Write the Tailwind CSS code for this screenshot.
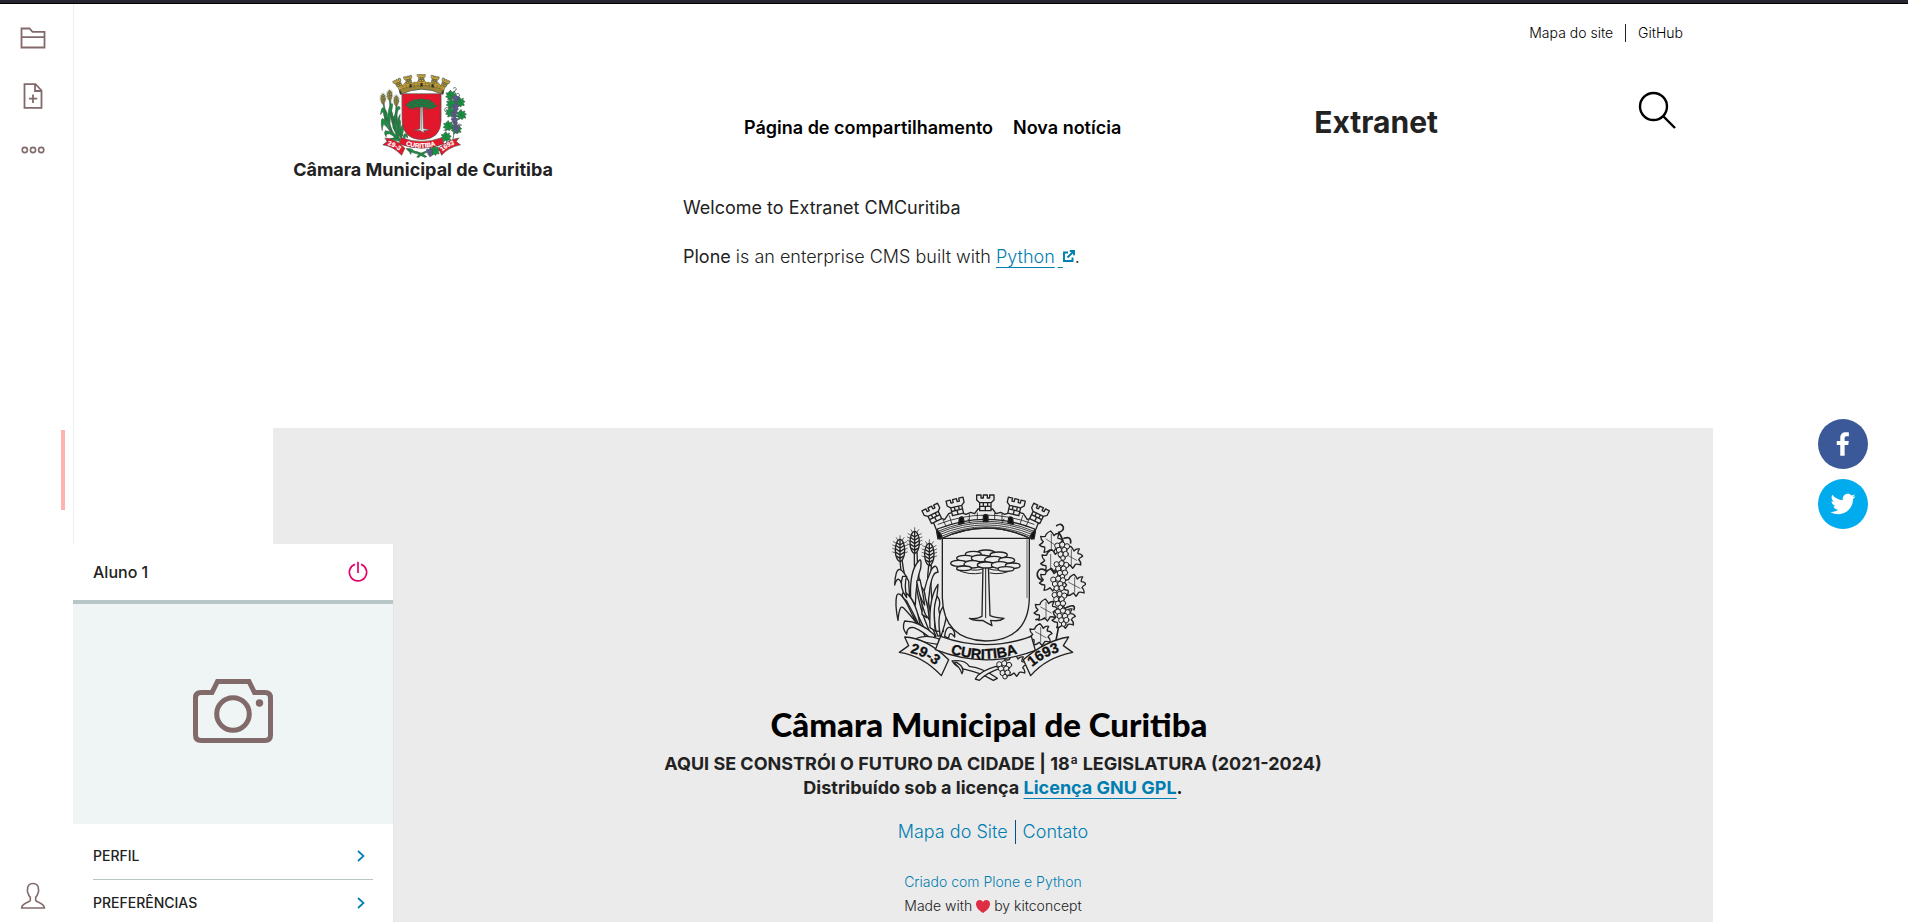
<!DOCTYPE html>
<html lang="pt-BR">
<head>
<meta charset="utf-8">
<title>Extranet — Câmara Municipal de Curitiba</title>
<script src="https://cdn.jsdelivr.net/npm/@tailwindcss/browser@4"></script>
</head>
<body class="min-h-screen flex flex-col bg-white text-[#222] text-lg leading-6 font-light font-['Inter',sans-serif]">

<svg class="absolute w-0 h-0" aria-hidden="true">
  <defs>
    <path id="tower" d="M-26 -20h13v9h7v-9h12v9h7v-9h13v15l-9 8v24h-34v-24l-9 -8zM-17 3H17M-17 14H17M-6 3V14M7 3V14M0 14V27"/>
    <g id="ear">
      <path fill="none" stroke-width="2" d="M-8 -20l-12-6M-8 -10l-14-6M-8 0l-14-6M-8 10l-14-5M8 -20l12-6M8 -10l14-6M8 0l14-6M8 10l14-5M-5 -28l-6-10M0 -30v-14M5 -28l7-10"/>
      <ellipse rx="14" ry="33"/>
      <path d="M0 -32V32M-11 -14L0 -6L11 -14M-12 -4L0 4L12 -4M-12 6L0 14L12 6M-9 18L0 24L9 18M-9 -22L0 -16L9 -22" fill="none"/>
    </g>
    <path id="vineleaf" d="M-2 -32Q4 -26 8 -18Q14 -26 24 -24Q18 -14 20 -10Q30 -10 34 -2Q24 2 22 8Q30 14 28 24Q18 20 12 22Q8 30 4 34Q0 28 -4 24Q-12 32 -22 32Q-18 22 -20 16Q-30 16 -36 10Q-26 4 -24 0Q-32 -6 -32 -16Q-24 -14 -18 -16Q-16 -26 -2 -32z"/>
    <g id="grapes">
      <circle r="8" cx="-14" cy="-12"/><circle r="8" cx="1" cy="-15"/><circle r="8" cx="15" cy="-10"/>
      <circle r="8" cx="-9" cy="1"/><circle r="8" cx="7" cy="1"/><circle r="8" cx="-4" cy="14"/><circle r="8" cx="11" cy="13"/><circle r="7" cx="3" cy="25"/>
    </g>
    <path id="band-l" d="M122 516Q168 524 205 560"/>
    <path id="band-c" d="M243 517Q348 552 455 514"/>
    <path id="band-r" d="M488 558Q530 522 586 508"/>
    <symbol id="crest" viewBox="68 40 582 562">
      <g class="stroke-(--line)" stroke-width="4" stroke-linejoin="round" stroke-linecap="round">
        <!-- wheat and leaves -->
        <g class="fill-(--leaf)">
          <path d="M92 238Q98 350 170 470L178 466Q112 350 98 236z"/>
          <path d="M135 214Q132 360 190 470L200 466Q146 350 143 214z"/>
          <path d="M178 254Q164 370 206 466L214 462Q178 370 186 254z"/>
          <path d="M118 300Q80 225 76 312Q88 270 104 330Q112 370 122 372z"/>
          <path d="M124 350Q120 270 148 240Q158 228 154 262Q140 300 138 372z"/>
          <path d="M158 400Q156 330 186 266Q202 242 206 274Q190 270 182 320Q176 370 172 410z"/>
          <path d="M128 400Q92 320 82 344Q76 370 86 418Q90 370 102 380Q122 400 146 432z"/>
          <path d="M150 420Q136 350 104 332Q90 344 112 360Q134 400 156 446z"/>
          <path d="M168 400Q146 340 152 316Q166 320 168 350Q178 380 180 416z"/>
          <path d="M182 440Q178 350 206 310Q204 350 196 380Q194 420 198 450z"/>
          <path d="M200 450Q188 380 204 346Q216 360 208 384Q214 420 222 452z"/>
          <path d="M214 470Q200 400 224 374Q236 400 226 430z"/>
          <path d="M196 462Q150 420 106 420Q96 440 112 460Q112 436 134 440Q160 450 196 482z"/>
          <path d="M210 474Q170 458 136 474Q160 484 206 490z"/>
          <path d="M226 466Q230 430 248 442Q258 452 256 468Q240 446 238 472z"/>
          <path d="M100 286Q88 320 112 350Q104 310 112 286z"/>
          <path d="M142 300Q150 350 166 372Q160 330 152 296z"/>
        </g>
        <g class="fill-(--gold)">
          <use href="#ear" x="92" y="208"/>
          <use href="#ear" x="136" y="184"/>
          <use href="#ear" x="180" y="220"/>
        </g>
        <!-- vine -->
        <path fill="none" stroke-width="5" d="M562 134Q576 124 582 138Q584 150 568 154Q600 200 566 250Q548 300 570 350Q574 420 560 478M584 172Q606 164 604 186M560 300Q500 306 504 276Q510 258 528 268M590 380Q620 366 614 386M540 410L500 416"/>
        <g class="fill-(--leaf)">
          <use href="#vineleaf" x="546" y="182"/><use href="#vineleaf" x="606" y="228"/>
          <use href="#vineleaf" x="550" y="238"/><use href="#vineleaf" x="616" y="312"/>
          <use href="#vineleaf" x="546" y="296"/><use href="#vineleaf" x="530" y="386"/>
          <use href="#vineleaf" x="584" y="408"/><use href="#vineleaf" x="514" y="460"/>
          <use href="#vineleaf" x="438" y="552"/>
          <path d="M248 540Q286 534 300 556Q340 560 384 592L372 598Q330 574 290 566Q262 562 248 540z"/>
          <path d="M318 594Q330 570 380 556L392 562Q350 576 330 598z"/>
          <path d="M254 546Q270 556 278 578Q288 560 262 544z"/>
        </g>
        <path fill="none" stroke-width="2" d="M546 160V206M530 174L560 194M606 206V252M590 220L622 238M616 290V334M598 304L632 322M530 364V410M514 378L546 396M514 440V482M498 452L530 470M544 220V260"/>
        <g class="fill-(--grape)" stroke-width="3">
          <use href="#grapes" x="578" y="206"/><use href="#grapes" x="576" y="262"/>
          <use href="#grapes" x="566" y="308"/><use href="#grapes" x="570" y="354"/>
          <use href="#grapes" x="580" y="404"/><use href="#grapes" x="404" y="562"/>
        </g>
        <!-- shield -->
        <path class="fill-(--shield)" d="M219 172H480V350Q478 476 350 480Q222 476 219 350z"/>
        <path fill="none" stroke-width="2" d="M473 176V350"/>
        <!-- araucaria -->
        <path class="fill-(--trunk)" d="M341 250L338 406Q320 416 300 412Q310 420 340 418L350 424L368 434L364 418Q390 422 404 412Q378 410 362 404L357 250z"/>
        <path fill="none" stroke-width="3" d="M349 262V410M336 276Q300 284 262 266M362 276Q400 284 432 264M340 264Q310 274 280 258M360 264Q390 274 414 258"/>
        <g class="fill-(--tree)">
          <ellipse cx="350" cy="216" rx="26" ry="9"/><ellipse cx="312" cy="220" rx="24" ry="9"/><ellipse cx="388" cy="222" rx="26" ry="9"/>
          <ellipse cx="288" cy="232" rx="26" ry="9"/><ellipse cx="334" cy="232" rx="28" ry="10"/><ellipse cx="374" cy="236" rx="28" ry="10"/><ellipse cx="412" cy="238" rx="24" ry="9"/>
          <ellipse cx="268" cy="247" rx="24" ry="9"/><ellipse cx="310" cy="250" rx="26" ry="11"/><ellipse cx="350" cy="252" rx="26" ry="9"/><ellipse cx="392" cy="252" rx="26" ry="10"/><ellipse cx="430" cy="254" rx="22" ry="8"/>
          <ellipse cx="284" cy="262" rx="22" ry="7"/><ellipse cx="410" cy="264" rx="24" ry="7"/>
        </g>
        <!-- mural crown -->
        <g class="fill-(--gold)">
          <path d="M186 108L206 118L210 110L226 116L238 98L262 90L290 100L304 94L316 98L326 84H370L380 98L394 94L406 100L436 90L462 98L474 116L490 110L496 118L514 108L488 174Q350 108 212 174z"/>
          <use href="#tower" transform="translate(190 96) rotate(-26)"/>
          <use href="#tower" transform="translate(260 74) rotate(-13)"/>
          <use href="#tower" transform="translate(348 62)"/>
          <use href="#tower" transform="translate(438 74) rotate(13)"/>
          <use href="#tower" transform="translate(508 96) rotate(26)"/>
          <path d="M204 144Q350 86 496 144L488 174Q350 108 212 174z"/>
        </g>
        <path fill="none" stroke-width="2.500" d="M208 150Q350 91 492 150M209 155Q350 96 491 155M210 161Q350 102 490 161M211 168Q350 106 489 168M206 130Q350 74 494 130M300 100V120M324 96V116M376 96V116M398 100V120M240 104L248 130M460 104L452 130M222 118L230 136M478 118L470 136M296 114L302 126M404 114L398 126"/>
        <path class="fill-(--dark)" d="M268 130L270 112Q276 104 282 110L284 126zM342 122V104Q349 96 356 104V122zM416 126L418 110Q424 104 430 112L432 130zM206 174L202 152Q208 146 218 168zM494 174L498 152Q492 146 482 168z"/>
        <!-- ribbons -->
        <g class="fill-(--ribbon)">
          <path d="M106 468Q170 470 238 536L216 584Q160 524 90 514L118 494z"/>
          <path d="M598 468Q530 478 462 536L484 584Q530 530 610 514L582 494z"/>
          <path d="M214 466Q350 516 486 466L498 508Q350 566 198 506z"/>
        </g>
      </g>
      <g class="fill-(--word) stroke-(--word) stroke-1 font-['Liberation_Sans',sans-serif] font-bold">
        <text font-size="43"><textPath href="#band-l">29-3</textPath></text>
        <text font-size="43"><textPath href="#band-c">CURITIBA</textPath></text>
        <text font-size="43"><textPath href="#band-r">1693</textPath></text>
      </g>
    </symbol>
  </defs>
</svg>

<div class="h-1 shrink-0 bg-[#262630] border-b border-black"></div>

<div class="flex flex-1">
  <aside class="fixed top-1 bottom-0 left-0 z-10 w-[74px] flex flex-col items-center bg-white border-r border-[#edeff0] pt-3 pb-1.5 pr-2 text-[#826a6a]">
    <button type="button" aria-label="Conteúdo" class="h-11 w-11 flex items-center justify-center">
      <svg class="w-[26px] h-[22px]" viewBox="0 0 26 22" fill="none" stroke="currentColor" stroke-width="1.8"><path d="M1.5 1.5H9.5L12.500 4.800H24.500V20.500H1.500zM1.500 10.200H24.500"/></svg>
    </button>
    <button type="button" aria-label="Adicionar" class="mt-3 h-12 w-11 flex items-center justify-center">
      <svg class="w-5 h-[26px]" viewBox="0 0 20 26" fill="none" stroke="currentColor" stroke-width="1.8"><path d="M1.500 1.200H12.500L18.500 7.500V24.800H1.500zM12 1.500V8H18.500M10 11.500V20M6 15.700H14.200"/></svg>
    </button>
    <button type="button" aria-label="Mais" class="mt-2 h-11 w-11 flex items-center justify-center">
      <svg class="w-6 h-2" viewBox="0 0 24 8" fill="none" stroke="currentColor" stroke-width="1.600"><circle cx="3.800" cy="4" r="2.600"/><circle cx="12" cy="4" r="2.600"/><circle cx="20.200" cy="4" r="2.600"/></svg>
    </button>
    <button type="button" aria-label="Usuário" class="mt-auto h-10 w-11 flex items-center justify-center">
      <svg class="w-[26px] h-7" viewBox="0 0 26 28" fill="none" stroke="currentColor" stroke-width="1.600"><path d="M13 1.500C9 1.500 7.300 4 7.600 7.500C7.200 8 7.200 10 8 11C8.400 13 9.500 14.500 10.300 15.200V18.500C10 20 2 20.500 1.600 26H24.400C24 20.500 16 20 15.700 18.500V15.200C16.500 14.500 17.600 13 18 11C18.800 10 18.800 8 18.400 7.500C18.700 4 17 1.500 13 1.500z"/></svg>
    </button>
    <button type="button" aria-label="Recolher barra" class="absolute top-[426px] right-2 w-1 h-20 bg-[#ffb2b1]"></button>
  </aside>

  <div class="flex-1 flex flex-col pl-[78px]">
    <div class="w-full max-w-[1440px] mx-auto flex-1 flex flex-col">
      <header class="h-[180px] flex flex-col">
        <nav aria-label="Ferramentas" class="h-[58px] flex justify-end items-center pr-[30px] text-sm text-black">
          <a href="#mapa">Mapa do site</a>
          <span class="mx-3 h-[18px] w-px bg-[#222]"></span>
          <a href="#github">GitHub</a>
        </nav>
        <div class="flex px-5">
          <a href="#inicio" class="w-[260px] pt-3 flex flex-col items-center font-bold whitespace-nowrap">
            <svg role="img" aria-label="Brasão de Curitiba" class="w-[88px] h-[84px] [--line:#3f5548] [--leaf:#14933f] [--gold:#dba52c] [--grape:#6a58ae] [--shield:#e3172b] [--trunk:#e8e2e4] [--tree:#16843c] [--dark:#3a2c10] [--ribbon:#e3172b] [--word:#fff]"><use href="#crest"/></svg>
            <span>Câmara Municipal de Curitiba</span>
          </a>
          <nav aria-label="Principal" class="ml-[191px] mt-[54px] flex gap-5 font-semibold text-black whitespace-nowrap">
            <a href="#compartilhamento">Página de compartilhamento</a>
            <a href="#noticia">Nova notícia</a>
          </nav>
          <div class="ml-auto mt-[42px] mr-[200px] text-[30px] leading-9 font-bold">Extranet</div>
          <button type="button" aria-label="Buscar" class="mt-[29px] mr-[15px] w-10 h-10 text-black">
            <svg class="w-10 h-10" viewBox="0 0 40 40" fill="none" stroke="currentColor" stroke-width="2.400"><circle cx="15.500" cy="15.500" r="13.500"/><path d="M25 25L37 37"/></svg>
          </button>
        </div>
      </header>

      <main class="w-full max-w-[620px] mx-auto h-[244px] pt-3">
        <p class="font-normal">Welcome to Extranet CMCuritiba</p>
        <p class="mt-[25px]"><span class="font-normal">Plone</span> is an enterprise CMS built with <a href="#python" class="text-[#007eb1]"><span class="underline underline-offset-4 decoration-1">Python</span><span class="ml-[3px] underline underline-offset-4 decoration-1">&nbsp;</span><svg class="inline w-3 h-3 -mt-1" viewBox="0 0 12 12" fill="none" stroke="currentColor" stroke-width="1.900"><path d="M5 2.500H1V11H9.500V7.500M4.500 7.500L10.500 1.500M6.800 1H11V5.200"/></svg></a>.</p>
      </main>

      <footer class="flex-1 bg-[#ebebeb] flex flex-col items-center pt-[66px] pb-1 text-center">
        <div class="flex flex-col items-center pr-2">
          <svg role="img" aria-label="Brasão de Curitiba" class="w-[194px] h-[188px] [--line:#222] [--leaf:#ebebeb] [--gold:#ebebeb] [--grape:#ebebeb] [--shield:#ebebeb] [--trunk:#ebebeb] [--tree:#ebebeb] [--dark:#111] [--ribbon:#ebebeb] [--word:#111]"><use href="#crest"/></svg>
          <div class="mt-[22px] text-[33px] leading-10 font-black text-black whitespace-nowrap font-['Lato',sans-serif]">Câmara Municipal de Curitiba</div>
        </div>
        <p class="mt-2 font-bold whitespace-nowrap">AQUI SE CONSTRÓI O FUTURO DA CIDADE | 18ª LEGISLATURA (2021-2024)</p>
        <p class="font-bold">Distribuído sob a licença <a href="#gpl" class="text-[#007eb1] underline underline-offset-4 decoration-1">Licença GNU GPL</a>.</p>
        <nav aria-label="Rodapé" class="mt-5 flex text-[#007eb1]">
          <a href="#mapa-site" class="pr-[7px] border-r border-[#00508f]">Mapa do Site</a>
          <a href="#contato" class="pl-[7px]">Contato</a>
        </nav>
        <a href="#plone" class="mt-[26px] text-sm leading-6 text-[#007eb1]">Criado com Plone e Python</a>
        <p class="text-sm leading-6 flex items-center gap-1">Made with
          <svg role="img" aria-label="amor" class="w-3.5 h-[13px]" viewBox="0 0 14 13" fill="#dd2e44"><path d="M7 13C3 10.500 0 7.500 0 4C0 1.500 1.700 0 3.700 0C5.200 0 6.400 .8 7 2C7.600 .8 8.800 0 10.300 0C12.300 0 14 1.500 14 4C14 7.500 11 10.500 7 13z"/></svg>
          by kitconcept</p>
      </footer>
    </div>
  </div>
</div>

<section aria-label="Usuário" class="fixed left-[73px] -bottom-1 z-20 w-[321px] bg-white border-r border-[#e2e6e7]">
  <div class="h-14 flex items-center justify-between pl-5 pr-[25px] text-base font-medium">
    <h2>Aluno 1</h2>
    <button type="button" aria-label="Sair" class="text-[#e40166]">
      <svg class="w-5 h-[22px]" viewBox="0 0 20 22" fill="none" stroke="currentColor" stroke-width="1.700"><path d="M7 3.200A8.600 8.600 0 1 0 13 3.200M10 .8V12"/></svg>
    </button>
  </div>
  <div class="h-[224px] border-t-4 border-[#b8c6c8] bg-[#eff4f5] flex items-center justify-center text-[#826a6a]">
    <svg role="img" aria-label="Foto do perfil" class="w-20 h-16 -mt-1.5" viewBox="0 0 80 64" fill="none" stroke="currentColor" stroke-width="5"><path d="M24.500 2.500H56L61.500 13.500H72Q77.500 13.500 77.500 19V56Q77.500 61.500 72 61.500H8Q2.500 61.500 2.500 56V19Q2.500 13.500 8 13.500H19z"/><circle cx="40" cy="35" r="16.300"/><circle cx="66.500" cy="24" r="3.700" fill="currentColor" stroke="none"/></svg>
  </div>
  <ul class="px-5 pt-[9px] text-sm font-medium">
    <li class="h-[47px] border-b border-[#b8c6c8]">
      <a href="#perfil" class="h-full flex items-center justify-between pr-2">PERFIL <svg class="w-2 h-3 text-[#007eb1]" viewBox="0 0 8 12" fill="none" stroke="currentColor" stroke-width="1.700"><path d="M1 1L6.500 6L1 11"/></svg></a>
    </li>
    <li class="h-[46px]">
      <a href="#preferencias" class="h-full flex items-center justify-between pr-2">PREFERÊNCIAS <svg class="w-2 h-3 text-[#007eb1]" viewBox="0 0 8 12" fill="none" stroke="currentColor" stroke-width="1.700"><path d="M1 1L6.500 6L1 11"/></svg></a>
    </li>
  </ul>
</section>

<div class="fixed right-10 top-[419px] z-20 flex flex-col gap-2.5">
  <a href="#facebook" aria-label="Facebook" class="w-[50px] h-[50px] rounded-full bg-[#3b5998] flex items-center justify-center">
    <svg class="w-[50px] h-[50px]" viewBox="0 0 64 64" fill="#fff"><path d="M34.100 47V33.300h4.600l.7-5.300h-5.300v-3.400c0-1.500.4-2.600 2.600-2.600h2.800v-4.800c-.5-.1-2.200-.2-4.100-.2-4.100 0-6.900 2.500-6.900 7V28H24v5.300h4.500V47h5.600z"/></svg>
  </a>
  <a href="#twitter" aria-label="Twitter" class="w-[50px] h-[50px] rounded-full bg-[#00aced] flex items-center justify-center">
    <svg class="w-[50px] h-[50px]" viewBox="0 0 64 64" fill="#fff"><path d="M48 22.100c-1.200.5-2.400.9-3.800 1 1.400-.8 2.400-2.100 2.900-3.600-1.300.8-2.700 1.300-4.200 1.600C41.700 19.800 40 19 38.200 19c-3.600 0-6.600 2.900-6.600 6.600 0 .5.100 1 .2 1.500-5.500-.3-10.300-2.900-13.500-6.900-.6 1-.9 2.100-.9 3.300 0 2.300 1.200 4.300 2.900 5.500-1.100 0-2.100-.3-3-.8v.1c0 3.200 2.300 5.800 5.300 6.400-.6.1-1.100.2-1.700.2-.4 0-.8 0-1.200-.1.800 2.600 3.300 4.500 6.100 4.600-2.200 1.800-5.100 2.800-8.200 2.800-.5 0-1.100 0-1.600-.1 2.900 1.900 6.400 2.900 10.100 2.900 12.100 0 18.700-10 18.700-18.700v-.8c1.300-1 2.400-2.200 3.200-3.400z"/></svg>
  </a>
</div>

</body>
</html>
